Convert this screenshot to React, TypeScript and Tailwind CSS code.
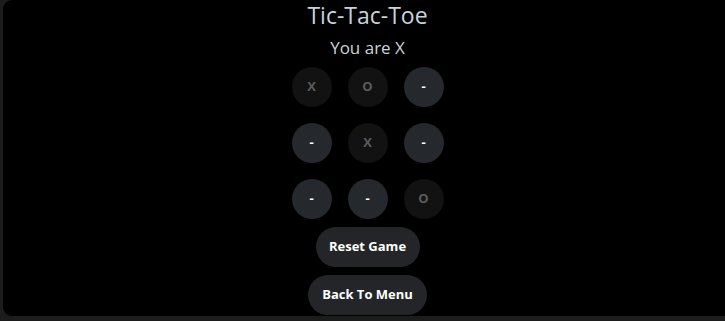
import React from "react";

const board = ["X", "O", "-", "-", "X", "-", "-", "-", "O"];

export default function App() {
  return (
    <div className="w-[725px] h-[321px] bg-[#1c1c1c] overflow-hidden" style={{ fontFamily: '"Open Sans", "Noto Sans", sans-serif' }}>
      <div className="ml-[3px] h-[316px] bg-black rounded-l-[9px] flex flex-col items-center pl-[7px]">
        <h1 className="pt-[1px] text-[23px] leading-[28px] text-[#c6d4de]">Tic-Tac-Toe</h1>
        <div className="mt-[7px] text-[17px] leading-[24px] text-[#c6d4de]">You are X</div>
        <div className="mt-[7px] grid grid-cols-3 gap-[16px]">
          {board.map((c, i) => (
            <div
              key={i}
              className={
                c === "-"
                  ? "w-[40px] h-[40px] rounded-full bg-[#25282c] text-white flex items-center justify-center text-[13px] font-bold"
                  : "w-[40px] h-[40px] rounded-full bg-[#121212] text-[#5c5c5c] flex items-center justify-center text-[13px] font-bold"
              }
            >
              {c}
            </div>
          ))}
        </div>
        <button className="mt-[8px] h-[40px] w-[104px] rounded-full bg-[#232528] text-white text-[13px] font-bold">
          Reset Game
        </button>
        <button className="mt-[8px] h-[40px] w-[119px] rounded-full bg-[#232528] text-white text-[13px] font-bold">
          Back To Menu
        </button>
      </div>
    </div>
  );
}
